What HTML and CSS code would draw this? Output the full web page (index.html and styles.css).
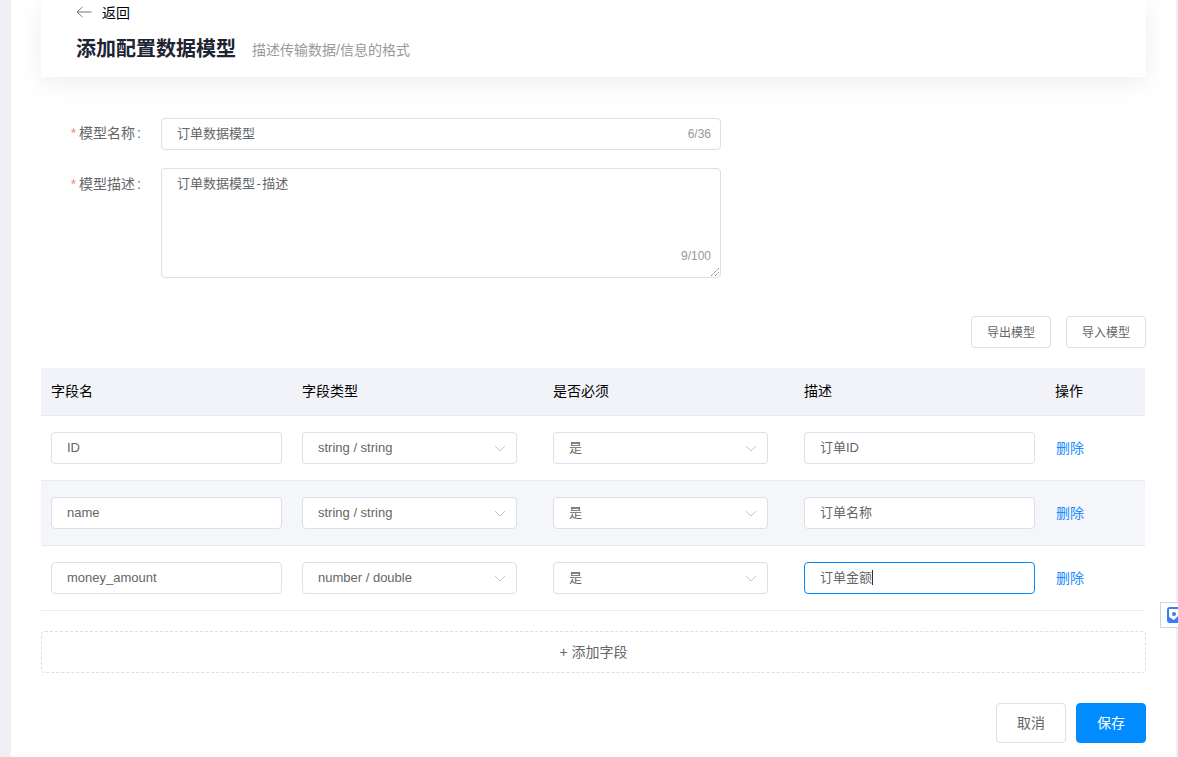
FILE: index.html
```html
<!DOCTYPE html>
<html lang="zh-CN">

<head>
    <meta charset="UTF-8">
    <title>添加配置数据模型</title>
    <link rel="stylesheet" href="styles.css">
</head>

<body>
    <div class="page">
        <!-- Header -->
        <div class="page-header">
            <div class="back">
                <svg class="back-icon" width="16" height="12" viewBox="0 0 16 12">
                    <path d="M15.500 6H1M6.500 .8 1 6l5.500 5.200" fill="none" stroke="#777" stroke-width="1" />
                </svg>
                <span>返回</span>
            </div>
            <div class="title-row">
                <h2>添加配置数据模型</h2>
                <span class="subtitle">描述传输数据/信息的格式</span>
            </div>
        </div>

        <!-- Model form -->
        <div class="model-form">
            <div class="form-group">
                <label><i>*</i>模型名称<span class="colon">:</span></label>
                <div class="field field-wide">
                    <span>订单数据模型</span>
                    <span class="count">6/36</span>
                </div>
            </div>
            <div class="form-group">
                <label><i>*</i>模型描述<span class="colon">:</span></label>
                <div class="field field-wide field-area">
                    <span>订单数据模型<span class="dash">-</span>描述</span>
                    <span class="count">9/100</span>
                    <svg class="grip" width="10" height="10" viewBox="0 0 10 10">
                        <path d="M1 9 9 1M5 9 9 5" stroke="#555" stroke-width="1" stroke-dasharray="1 1" fill="none" />
                    </svg>
                </div>
            </div>
        </div>

        <div class="toolbar">
            <button class="btn">导出模型</button>
            <button class="btn">导入模型</button>
        </div>

        <!-- Fields -->
        <table class="fields">
            <thead>
                <tr>
                    <th>字段名</th>
                    <th>字段类型</th>
                    <th>是否必须</th>
                    <th>描述</th>
                    <th>操作</th>
                </tr>
            </thead>
            <tbody>
                <tr>
                    <td><div class="field field-name">ID</div></td>
                    <td><div class="field select">string / string<svg class="arrow" width="12" height="7" viewBox="0 0 12 7"><path d="M1 1l5 5 5-5" /></svg></div></td>
                    <td><div class="field select">是<svg class="arrow" width="12" height="7" viewBox="0 0 12 7"><path d="M1 1l5 5 5-5" /></svg></div></td>
                    <td><div class="field field-name">订单ID</div></td>
                    <td><a class="link">删除</a></td>
                </tr>
                <tr class="alt">
                    <td><div class="field field-name">name</div></td>
                    <td><div class="field select">string / string<svg class="arrow" width="12" height="7" viewBox="0 0 12 7"><path d="M1 1l5 5 5-5" /></svg></div></td>
                    <td><div class="field select">是<svg class="arrow" width="12" height="7" viewBox="0 0 12 7"><path d="M1 1l5 5 5-5" /></svg></div></td>
                    <td><div class="field field-name">订单名称</div></td>
                    <td><a class="link">删除</a></td>
                </tr>
                <tr>
                    <td><div class="field field-name">money_amount</div></td>
                    <td><div class="field select">number / double<svg class="arrow" width="12" height="7" viewBox="0 0 12 7"><path d="M1 1l5 5 5-5" /></svg></div></td>
                    <td><div class="field select">是<svg class="arrow" width="12" height="7" viewBox="0 0 12 7"><path d="M1 1l5 5 5-5" /></svg></div></td>
                    <td><div class="field field-name focused">订单金额<span class="caret"></span></div></td>
                    <td><a class="link">删除</a></td>
                </tr>
            </tbody>
        </table>

        <div class="add-field">+ 添加字段</div>

        <div class="footer">
            <button class="btn btn-large">取消</button>
            <button class="btn btn-large btn-primary">保存</button>
        </div>
    </div>

    <!-- Floating widget on the right edge -->
    <div class="widget">
        <svg width="16" height="16" viewBox="0 0 16 16">
            <rect width="16" height="16" rx="3" fill="#3b7bf6" />
            <path d="M2 2h12v4l-7 7-5-3z" fill="#fff" />
            <circle cx="7" cy="7" r="2" fill="#3b7bf6" />
        </svg>
    </div>
</body>

</html>
```

FILE: styles.css
```css
html,
body {
    height: 100%;
}

body {
    font-family: "Liberation Sans", "Noto Sans CJK SC", sans-serif;
    font-size: 13px;
    background-color: #eef0f5;
    margin: 0;
    overflow: hidden;
}

.page {
    width: 1105px;
    height: 757px;
    margin-left: 11px;
    padding: 0 30px;
    background: white;
    color: #666;
}

.page-header {
    height: 77px;
    padding-left: 35px;
    background: white;
    box-shadow: 0px 6px 24px rgba(0, 0, 0, 0.07);
}

.back {
    display: flex;
    align-items: center;
    height: 24px;
    font-size: 14px;
    color: #000;
}

.back-icon {
    margin-right: 10px;
}

.title-row {
    display: flex;
    align-items: center;
    height: 50px;
}

h2 {
    margin: -3px 0 0;
    font-size: 20px;
    font-weight: bold;
    color: #1d2433;
}

.subtitle {
    margin-left: 16px;
    font-size: 14px;
    color: #999;
}

.model-form {
    padding-top: 41px;
}

.form-group {
    display: flex;
    margin-bottom: 18px;
}

label {
    box-sizing: border-box;
    width: 120px;
    height: 32px;
    padding-right: 20px;
    line-height: 30px;
    font-size: 14px;
    text-align: right;
    color: #666;
}

.form-group + .form-group label {
    line-height: 32px;
}

label i {
    margin-right: 3px;
    font-style: normal;
    color: #f78989;
}

.colon {
    margin-left: 2px;
}

.dash {
    margin: 0 1.5px;
}

.field {
    position: relative;
    box-sizing: border-box;
    height: 32px;
    line-height: 30px;
    padding: 0 15px;
    background: white;
    border: 1px solid #dcdee8;
    border-radius: 4px;
    color: #666;
}

.field-wide {
    width: 560px;
}

.field-area {
    height: 110px;
}

.count {
    position: absolute;
    right: 9px;
    bottom: 0;
    font-size: 12px;
    color: #999;
}

.field-area .count {
    bottom: 6px;
}

.grip {
    position: absolute;
    right: 0;
    bottom: 0;
}

.toolbar {
    display: flex;
    justify-content: flex-end;
    gap: 15px;
    margin-top: 38px;
}

.btn {
    box-sizing: border-box;
    width: 80px;
    height: 32px;
    padding: 0 0 2px;
    font-family: inherit;
    font-size: 12px;
    color: #666;
    background: white;
    border: 1px solid #dcdee8;
    border-radius: 4px;
}

.fields {
    width: 1104px;
    margin-top: 20px;
    table-layout: fixed;
    border-collapse: collapse;
}

.fields th {
    width: 231px;
    height: 44px;
    padding: 0 10px 3px;
    font-size: 14px;
    font-weight: normal;
    text-align: left;
    color: #000;
    background-color: #f1f3f8;
    border-bottom: 1px solid #e8eaf0;
}

.fields th:last-child {
    width: 80px;
}

.fields td {
    height: 64px;
    padding: 0 10px;
    border-bottom: 1px solid #e8eaf0;
}

.alt td {
    background-color: #f5f6fa;
}

.field-name {
    width: 231px;
}

.select {
    width: 215px;
    line-height: 29px;
}

.arrow {
    position: absolute;
    right: 10px;
    top: 12px;
}

.arrow path {
    fill: none;
    stroke: #c4c6cf;
}

.focused {
    border-color: #008cff;
}

.caret {
    display: inline-block;
    width: 1px;
    height: 15px;
    vertical-align: -3px;
    background: #333;
}

.link {
    display: block;
    margin-top: -2px;
    padding-left: 1px;
    font-size: 14px;
    color: #1a8cff;
}

.add-field {
    box-sizing: border-box;
    height: 42px;
    margin-top: 20px;
    line-height: 40px;
    font-size: 14px;
    text-align: center;
    border: 1px dashed #dcdee8;
    border-radius: 4px;
}

.footer {
    display: flex;
    justify-content: flex-end;
    gap: 10px;
    margin-top: 30px;
}

.btn-large {
    width: 70px;
    height: 40px;
    font-size: 14px;
}

.btn-primary {
    color: white;
    background-color: #008cff;
    border-color: #008cff;
}

.widget {
    position: absolute;
    left: 1160px;
    top: 602px;
    box-sizing: border-box;
    width: 18px;
    height: 26px;
    overflow: hidden;
    padding: 4px 0 0 6px;
    background: white;
    border: 1px solid #c9d4ee;
    border-right: 0;
}
```
